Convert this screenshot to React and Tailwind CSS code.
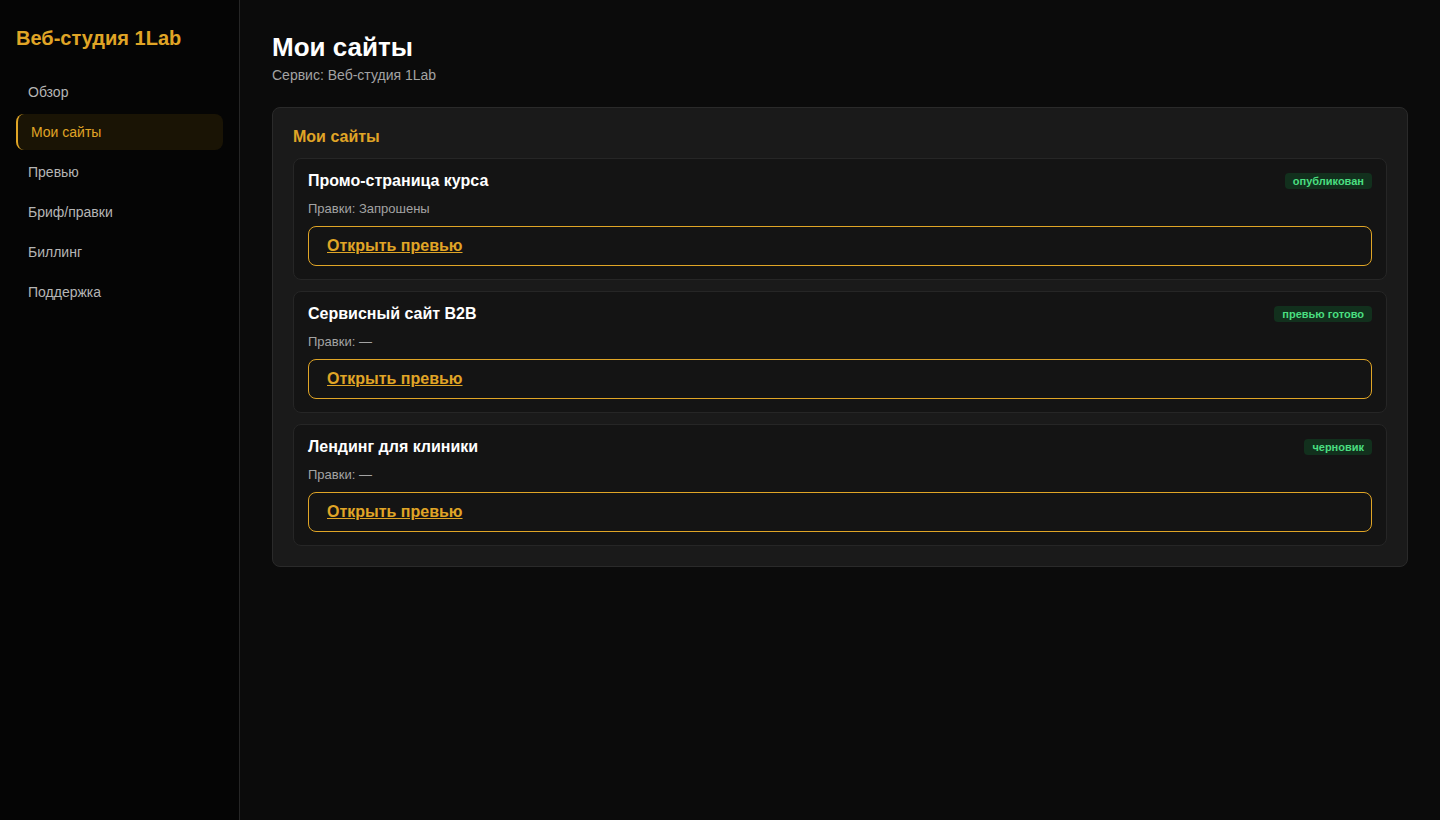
import React from "react";

const nav = ["Обзор", "Мои сайты", "Превью", "Бриф/правки", "Биллинг", "Поддержка"];
const sites = [
  { title: "Промо-страница курса", badge: "опубликован", edits: "Запрошены" },
  { title: "Сервисный сайт B2B", badge: "превью готово", edits: "—" },
  { title: "Лендинг для клиники", badge: "черновик", edits: "—" },
];

export default function App() {
  return (
    <div className="flex min-h-[820px] bg-[#0b0b0b] text-white" style={{ fontFamily: '"Liberation Sans", Arial, sans-serif' }}>
      <aside className="w-[240px] shrink-0 bg-[#050505] border-r border-[#262626] px-4 pt-[26px]">
        <div className="text-[20px] font-bold text-[#e0a526] leading-[24px] mb-[24px]">Веб-студия 1Lab</div>
        <nav className="flex flex-col gap-1">
          {nav.map((n) =>
            n === "Мои сайты" ? (
              <div key={n} className="h-[36px] flex items-center pl-[13px] rounded-lg border-l-2 border-[#e0a526] bg-[#1a1405] text-[14px] text-[#e0a526]">
                {n}
              </div>
            ) : (
              <div key={n} className="h-[36px] flex items-center px-3 text-[14px] text-[#b5b5b5]">
                {n}
              </div>
            )
          )}
        </nav>
      </aside>
      <main className="flex-1 px-8 pt-[32px]">
        <h1 className="text-[26px] font-bold leading-[30px]">Мои сайты</h1>
        <div className="text-[14px] leading-[16px] text-[#a3a3a3] mt-[5px]">Сервис: Веб-студия 1Lab</div>
        <section className="mt-[24px] bg-[#1a1a1a] border border-[#2a2a2a] rounded-lg px-5 pt-[19px] pb-5">
          <h2 className="text-[16px] font-bold text-[#e0a526] leading-[20px] mb-[11px]">Мои сайты</h2>
          <div className="flex flex-col gap-[11px]">
            {sites.map((s) => (
              <div key={s.title} className="bg-[#141414] border border-[#262626] rounded-lg px-[14px] pt-[12px] pb-[13px]">
                <div className="flex items-center justify-between">
                  <div className="text-[16px] font-bold leading-[20px]">{s.title}</div>
                  <span className="text-[11px] font-bold text-[#4ade80] bg-[#12301d] rounded px-2 leading-[16px]">{s.badge}</span>
                </div>
                <div className="text-[13px] text-[#a3a3a3] mt-[10px] leading-[16px]">Правки: {s.edits}</div>
                <div className="mt-[9px] h-[40px] border border-[#e0a526] rounded-lg flex items-center px-[18px]">
                  <a href="#" className="text-[16px] font-bold text-[#e0a526] underline">Открыть превью</a>
                </div>
              </div>
            ))}
          </div>
        </section>
      </main>
    </div>
  );
}
